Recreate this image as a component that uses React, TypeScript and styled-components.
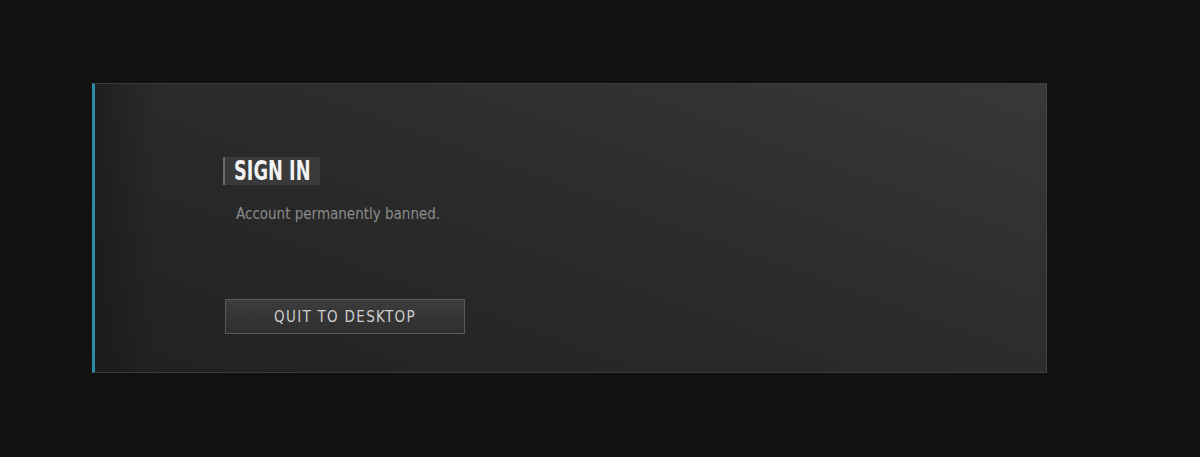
import React from "react";
import styled, { createGlobalStyle } from "styled-components";

const Global = createGlobalStyle`
  html, body { margin: 0; padding: 0; background: #111111; }
  body { font-family: "DejaVu Sans Condensed", "DejaVu Sans", sans-serif; }
`;

const Page = styled.div`
  width: 1200px;
  height: 457px;
  padding: 83px 0 0 92px;
  box-sizing: border-box;
`;

const Panel = styled.section`
  width: 955px;
  height: 290px;
  box-sizing: border-box;
  border: 1px solid #3a3a3a;
  border-right-color: #464646;
  border-left: 3px solid #2f8aa6;
  background:
    linear-gradient(90deg, rgba(20,20,20,0.5) 0px, rgba(20,20,20,0) 60px),
    linear-gradient(200deg, #383838 0%, #2c2c2c 45%, #212121 100%);
  padding: 73px 0 0 128px;
  display: flex;
  flex-direction: column;
  align-items: flex-start;
`;

const Title = styled.h1`
  margin: 0;
  height: 28px;
  width: 97px;
  box-sizing: border-box;
  display: flex;
  align-items: center;
  padding: 0 0 0 9px;
  background: #3a3a3a;
  border-left: 2px solid #6a6a6a;
  color: #f2f2f2;
  font-family: "DejaVu Sans Condensed", sans-serif;
  font-weight: 700;
  font-size: 26px;
  line-height: 1;
  white-space: nowrap;
`;

const TitleText = styled.span`
  display: inline-block;
  transform: scaleX(0.76);
  transform-origin: left center;
`;

const Message = styled.p`
  margin: 20px 0 0 13px;
  color: #8c8c8c;
  font-family: "DejaVu Sans Condensed", sans-serif;
  font-size: 15px;
  line-height: 18px;
`;

const QuitButton = styled.button`
  margin: 76px 0 0 2px;
  width: 240px;
  height: 35px;
  box-sizing: border-box;
  border: 1px solid #5a5a5a;
  background: linear-gradient(180deg, #3d3d3d 0%, #353535 50%, #2f2f2f 100%);
  color: #cfcfcf;
  font-family: "DejaVu Sans Condensed", sans-serif;
  font-size: 15px;
  letter-spacing: 1.3px;
  cursor: pointer;
`;

export default function App() {
  return (
    <>
      <Global />
      <Page>
        <Panel>
          <Title>
            <TitleText>SIGN IN</TitleText>
          </Title>
          <Message>Account permanently banned.</Message>
          <QuitButton>QUIT TO DESKTOP</QuitButton>
        </Panel>
      </Page>
    </>
  );
}
